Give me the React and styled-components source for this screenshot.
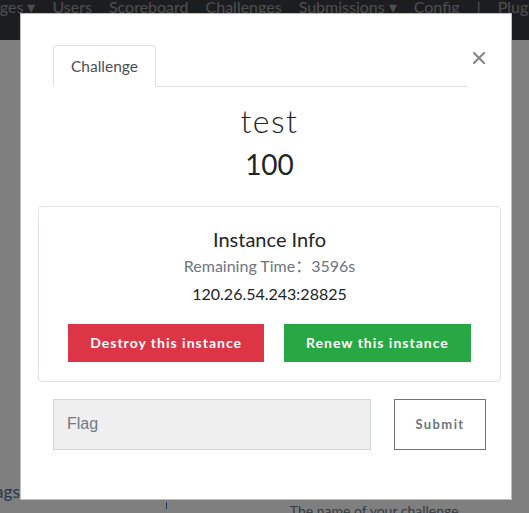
import React from "react";
import styled, { createGlobalStyle } from "styled-components";

const GlobalStyle = createGlobalStyle`
    html, body {
        margin: 0;
        padding: 0;
        overflow: hidden;
        background: #ffffff;
        font-family: Lato, "Noto Sans CJK SC", sans-serif;
    }
    * { box-sizing: border-box; }
`;

const navItems = ["Pages ▾", "Users", "Scoreboard", "Challenges", "Submissions ▾", "Config", "|", "Plugins"];

export default function App() {
    return (
        <>
            <GlobalStyle />
            <Page>
                <NavBar>
                    <NavList>
                        {navItems.map((item, i) => (
                            <NavLink key={i} $first={i === 0}>{item}</NavLink>
                        ))}
                    </NavList>
                </NavBar>
                <PageContent>
                    <FieldLabel>Tags</FieldLabel>
                    <Caret />
                    <HelpText>The name of your challenge</HelpText>
                </PageContent>
            </Page>

            <Backdrop />

            <Modal>
                <Column>
                    <HeaderRow>
                        <Tabs>
                            <Tab>Challenge</Tab>
                        </Tabs>
                        <CloseButton aria-label="Close">
                            <svg width="12" height="12" viewBox="0 0 12 12">
                                <path d="M1 1 L11 11 M11 1 L1 11" stroke="#878787" strokeWidth="2.1" strokeLinecap="square" />
                            </svg>
                        </CloseButton>
                    </HeaderRow>

                    <ChallengeName>test</ChallengeName>
                    <ChallengeValue>100</ChallengeValue>

                    <InstanceCard>
                        <CardTitle>Instance Info</CardTitle>
                        <Remaining>Remaining Time：3596s</Remaining>
                        <Address>120.26.54.243:28825</Address>
                        <ButtonRow>
                            <ActionButton $bg="#dc3545">Destroy this instance</ActionButton>
                            <ActionButton $bg="#28a745">Renew this instance</ActionButton>
                        </ButtonRow>
                    </InstanceCard>

                    <FlagRow>
                        <FlagInput placeholder="Flag" />
                        <SubmitButton>Submit</SubmitButton>
                    </FlagRow>
                </Column>
            </Modal>
        </>
    );
}

const Page = styled.div`
    width: 529px;
    height: 513px;
    background: #ffffff;
`

const NavBar = styled.nav`
    height: 40px;
    background: #373b40;
    overflow: hidden;
`

const NavList = styled.div`
    display: flex;
    margin-top: -3px;
    white-space: nowrap;
`

const NavLink = styled.span`
    padding: 0 8.5px;
    margin-left: ${props => props.$first ? "-26px" : "0"};
    font-size: 16px;
    line-height: 20px;
    color: rgba(255, 255, 255, 0.5);
`

const PageContent = styled.div`
    display: flex;
    align-items: flex-start;
    padding-top: 442px;
    white-space: nowrap;
`

const FieldLabel = styled.div`
    margin-left: -13px;
    font-size: 17px;
    line-height: 20px;
    color: #4c6f99;
`

const Caret = styled.div`
    width: 1px;
    height: 7px;
    margin: 20px 0 0 146px;
    background: #3c74bf;
`

const HelpText = styled.div`
    margin: 19px 0 0 123px;
    font-size: 14px;
    line-height: 20px;
    color: #6c757d;
`

const Backdrop = styled.div`
    position: fixed;
    inset: 0;
    background: rgba(0, 0, 0, 0.5);
`

const Modal = styled.div`
    position: fixed;
    top: 13px;
    left: 20px;
    width: 492px;
    padding: 31px 10px 49px 17px;
    background: #ffffff;
    border: 1px solid rgba(0, 0, 0, 0.25);
`

const Column = styled.div`
    display: flex;
    flex-direction: column;
    align-items: stretch;
`

const HeaderRow = styled.div`
    display: flex;
    align-items: flex-start;
    padding: 0 15px;
`

const Tabs = styled.div`
    flex: 1;
    display: flex;
    border-bottom: 1px solid #dee2e6;
`

const Tab = styled.div`
    margin-bottom: -1px;
    padding: 10px 17px;
    font-size: 15.5px;
    line-height: 20px;
    color: #495057;
    background: #ffffff;
    border: 1px solid #dee2e6;
    border-bottom-color: #ffffff;
    border-radius: 4px 4px 0 0;
`

const CloseButton = styled.div`
    display: flex;
    justify-content: flex-end;
    width: 19px;
    padding: 7px 1px 0 0;
`

const ChallengeName = styled.h2`
    margin: 15px 0 8px;
    font-size: 32px;
    font-weight: 300;
    line-height: 1.2;
    letter-spacing: 1.5px;
    text-align: center;
    color: #212529;
`

const ChallengeValue = styled.h3`
    margin: 0 0 24px;
    font-size: 28px;
    font-weight: 400;
    line-height: 1.2;
    text-align: center;
    color: #212529;
`

const InstanceCard = styled.div`
    display: flex;
    flex-direction: column;
    align-items: center;
    padding: 20px 0 19px;
    border: 1px solid #dee2e6;
    border-radius: 4px;
`

const CardTitle = styled.h5`
    margin: 0 0 3px;
    font-size: 20px;
    font-weight: 400;
    line-height: 24px;
    color: #212529;
`

const Remaining = styled.div`
    font-size: 16px;
    line-height: 24px;
    color: #6c757d;
`

const Address = styled.div`
    margin-top: 4px;
    font-size: 16px;
    line-height: 24px;
    color: #212529;
`

const ButtonRow = styled.div`
    display: flex;
    gap: 20px;
    margin-top: 18px;
`

const ActionButton = styled.button`
    height: 38px;
    padding: 0 22px;
    font-family: Lato, sans-serif;
    font-size: 14px;
    font-weight: 700;
    letter-spacing: 1px;
    color: #ffffff;
    background: ${props => props.$bg};
    border: none;
    border-radius: 0;
`

const FlagRow = styled.div`
    display: flex;
    gap: 23px;
    margin-top: 17px;
    padding: 0 15px;
`

const FlagInput = styled.input`
    flex: 1;
    min-width: 0;
    height: 51px;
    padding: 0 13px;
    font-family: "Liberation Sans", Arial, sans-serif;
    font-size: 16px;
    color: #495057;
    background: #efefef;
    border: 1px solid #d1d6db;
    border-radius: 0;
    outline: none;

    &::placeholder {
        color: #6d7a87;
    }
`

const SubmitButton = styled.button`
    width: 92px;
    height: 51px;
    font-family: Lato, sans-serif;
    font-size: 13px;
    font-weight: 700;
    letter-spacing: 1.4px;
    color: #6c757d;
    background: #ffffff;
    border: 1px solid #6c757d;
    border-radius: 0;
`
